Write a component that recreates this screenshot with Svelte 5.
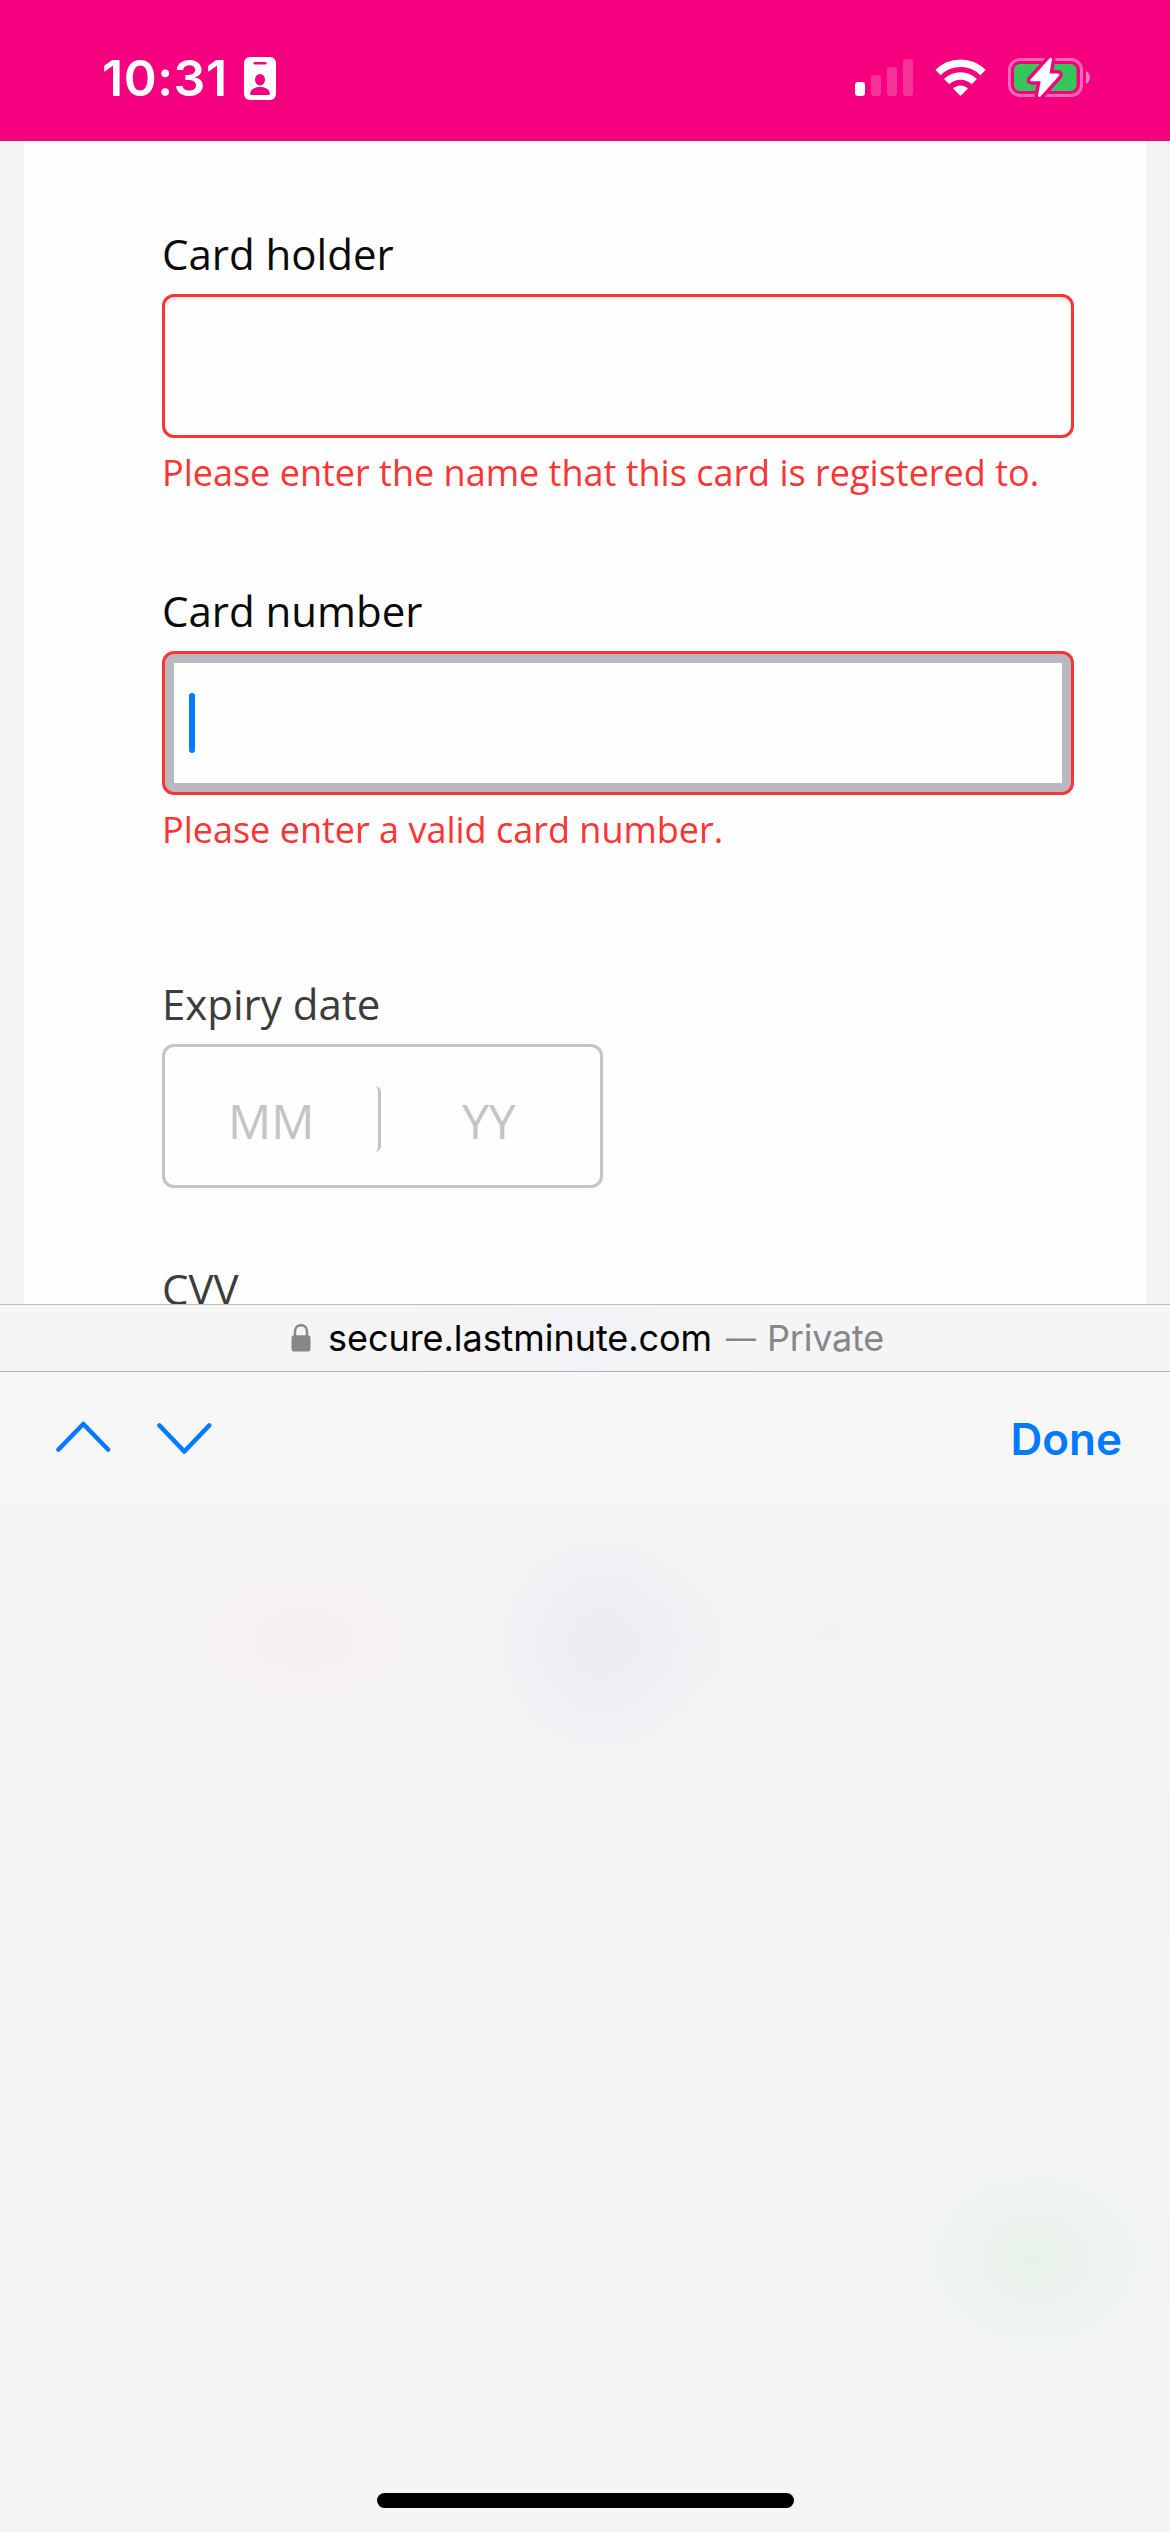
<script>
  const signalBars = [
    { x: 0, y: 23, height: 14, on: true },
    { x: 16, y: 16, height: 21, on: false },
    { x: 32, y: 8, height: 29, on: false },
    { x: 48, y: 0, height: 37, on: false }
  ];
</script>

<div class="screen">
  <header class="status">
    <div class="clock">
      <span class="time">10:31</span>
      <svg class="badge" width="32" height="43" viewBox="0 0 32 43">
        <rect width="32" height="43" rx="6" fill="#fff" />
        <rect x="9.5" y="5" width="13" height="2.6" rx="1.3" fill="#f5007e" />
        <ellipse cx="16" cy="22.7" rx="5" ry="5.8" fill="#f5007e" />
        <path d="M6.2 36.5C6.2 32.5 10.5 30 16 30s9.8 2.500 9.800 6.500c0 1-.5 1.500-1.500 1.500H7.700c-1 0-1.500-.5-1.500-1.500z" fill="#f5007e" />
      </svg>
    </div>
    <div class="indicators">
      <svg class="signal" width="58" height="37" viewBox="0 0 58 37">
        {#each signalBars as bar}
          <rect x={bar.x} y={bar.y} width="10" height={bar.height} rx="3" fill="#fff" fill-opacity={bar.on ? 1 : 0.2} />
        {/each}
      </svg>
      <svg class="wifi" width="51" height="37" viewBox="0 0 51 37">
        <g fill="none" stroke="#fff" stroke-width="7.400">
          <path d="M3 13.500A32 32 0 0 1 48 13.500" />
          <path d="M11.700 22.700A19.500 19.500 0 0 1 39.300 22.700" />
        </g>
        <path d="M18 29.600c4.300-4.200 10.700-4.200 15 0l-6.700 6.700q-.8.700-1.600 0z" fill="#fff" />
      </svg>
      <svg class="battery" width="83" height="43" viewBox="0 0 83 43">
        <rect x="1.500" y="3.500" width="72" height="36" rx="10.500" fill="none" stroke="#fff" stroke-opacity=".4" stroke-width="3" />
        <path d="M78 15c5.200 2.200 5.200 10.800 0 13z" fill="#fff" fill-opacity=".5" />
        <rect x="6" y="8" width="62.500" height="27" rx="6" fill="#34c759" />
        <path d="M41.500 2.500L22.500 23.500q-1 1.700 1 1.700h9.200L30 39.500q.5 2.500 2.500 1L51 19.700q1-1.900-1-2.200h-8.500L44 3q-.6-2-2.500-.5z" fill="#fff" stroke="#f5007e" stroke-width="7" stroke-linejoin="round" paint-order="stroke" />
      </svg>
    </div>
  </header>

  <main class="page">
    <form class="sheet">
      <section class="field">
        <label for="holder">Card holder</label>
        <div class="box invalid" id="holder"></div>
        <p class="error">Please enter the name that this card is registered to.</p>
      </section>
      <section class="field number">
        <label for="number">Card number</label>
        <div class="box invalid focused" id="number"><i class="caret"></i></div>
        <p class="error">Please enter a valid card number.</p>
      </section>
      <section class="field expiry">
        <label for="expiry">Expiry date</label>
        <div class="box date" id="expiry">
          <span class="month">MM</span>
          <span class="year">YY</span>
        </div>
      </section>
      <section class="field cvv">
        <span class="label">CVV</span>
      </section>
    </form>
  </main>

  <footer class="keyboard">
    <div class="address">
      <svg class="lock" width="20" height="28" viewBox="0 0 20 28">
        <path d="M4 13V7.500C4 3.600 6.500 1.200 10 1.200s6 2.400 6 6.300V13" fill="none" stroke="#86868b" stroke-width="2.500" />
        <rect x=".5" y="11.300" width="19" height="16.200" rx="2.800" fill="#86868b" />
      </svg>
      <span class="host">secure.lastminute.com</span>
      <span class="dash">—</span>
      <span class="mode">Private</span>
    </div>
    <div class="toolbar">
      <svg class="arrows" width="156" height="34" viewBox="0 0 156 34">
        <g fill="none" stroke="#007aff" stroke-width="4.600" stroke-linecap="round" stroke-linejoin="round">
          <path d="M2.500 28.500L27.300 3L52 28.500" />
          <path d="M103.500 4.500L128.300 30.500L153.200 4.500" />
        </g>
      </svg>
      <span class="done">Done</span>
    </div>
    <div class="pad"><div class="home"></div></div>
  </footer>
</div>

<style>
  :global(body) { margin: 0; }
  .screen {
    width: 1170px;
    height: 2532px;
    display: flex;
    flex-direction: column;
    overflow: hidden;
    background: #f4f4f4;
    font-family: Inter, sans-serif;
  }
  .status {
    flex: none;
    height: 141px;
    box-sizing: border-box;
    padding: 56px 79px 0 102px;
    display: flex;
    justify-content: space-between;
    align-items: flex-start;
    background: #f5007e;
    color: #fff;
  }
  .clock, .indicators { display: flex; align-items: flex-start; }
  .time {
    width: 142px;
    font-size: 50px;
    line-height: 44px;
    font-weight: 600;
    letter-spacing: 0.5px;
    white-space: nowrap;
  }
  .badge { margin-top: 1px; }
  .signal { margin: 3px 22px 0 0; }
  .wifi { margin: 3px 22px 0 0; }
  .page { flex: none; height: 1163px; padding: 0 24px; overflow: hidden; }
  .sheet {
    height: 1163px;
    box-sizing: border-box;
    padding: 84px 72px 0 138px;
    background: #fefefe;
    font-family: "Open Sans", sans-serif;
  }
  .field { display: flex; flex-direction: column; color: #0a0a0a; }
  .number { margin-top: 85px; }
  .expiry { margin-top: 121px; color: #3c3c3c; }
  .cvv { margin-top: 72px; color: #3c3c3c; }
  label, .label { font-size: 42px; line-height: 57px; margin-bottom: 12px; }
  .box {
    height: 144px;
    box-sizing: border-box;
    border: 3px solid #c4c4c4;
    border-radius: 12px;
    display: flex;
  }
  .invalid { border-color: #fb3434; box-shadow: inset 0 3px 3px rgba(0, 0, 0, 0.08); }
  .focused {
    padding: 9px;
    align-items: center;
    background: linear-gradient(#fefefe, #fefefe) content-box, #bab8bf;
    box-shadow: none;
  }
  .caret { width: 6px; height: 60px; margin-left: 15px; border-radius: 3px; background: #007aff; }
  .error { margin: 11px 0 0; font-size: 36px; line-height: 48px; color: #fb3434; white-space: nowrap; }
  .date {
    width: 441px;
    align-items: center;
    padding: 6px 0 0 60px;
    font-size: 48px;
    color: #c4c4c4;
  }
  .month {
    width: 156px;
    height: 66px;
    line-height: 70px;
    box-sizing: border-box;
    padding-left: 3px;
    border: 0 solid #c4c4c4;
    border-right-width: 3px;
    border-radius: 6px;
  }
  .year { line-height: 70px; height: 66px; margin-left: 81px; }
  .keyboard {
    flex: 1;
    display: flex;
    flex-direction: column;
    background:
      radial-gradient(ellipse 210px 130px at 305px 335px, #f5f0ef, transparent),
      radial-gradient(ellipse 150px 160px at 602px 340px, #ebedf3, transparent),
      radial-gradient(ellipse 230px 110px at 830px 330px, #f1f2f2, transparent),
      radial-gradient(ellipse 160px 130px at 1035px 955px, #e8f2eb, transparent),
      radial-gradient(ellipse 180px 200px at 1030px 560px, #f3f3f4, transparent),
      #f5f5f5;
  }
  .address {
    flex: none;
    height: 68px;
    box-sizing: border-box;
    border-top: 1px solid #bcbcbe;
    border-bottom: 1px solid #adb0b0;
    padding-left: 291px;
    display: flex;
    align-items: center;
    background: linear-gradient(90deg, #f5f5f5 35%, #f2f3f6 50%, #f5f5f5 65%);
    font-size: 36px;
    line-height: 66px;
    white-space: nowrap;
    color: #000;
  }
  .lock { margin-right: 17px; }
  .host { width: 398px; letter-spacing: -0.05px; }
  .dash { width: 41px; color: #86868b; font-size: 30px; }
  .mode { color: #86868b; letter-spacing: -0.2px; }
  .toolbar {
    flex: none;
    height: 131px;
    box-sizing: border-box;
    padding: 0 48px 0 56px;
    display: flex;
    justify-content: space-between;
    align-items: center;
    background: #f7f7f7;
  }
  .done { font-size: 44px; font-weight: 600; line-height: 60px; padding-top: 2px; color: #007aff; }
  .pad { flex: 1; display: flex; align-items: flex-end; justify-content: center; padding-bottom: 24px; }
  .home { width: 417px; height: 15px; border-radius: 8px; background: #000; }
</style>
